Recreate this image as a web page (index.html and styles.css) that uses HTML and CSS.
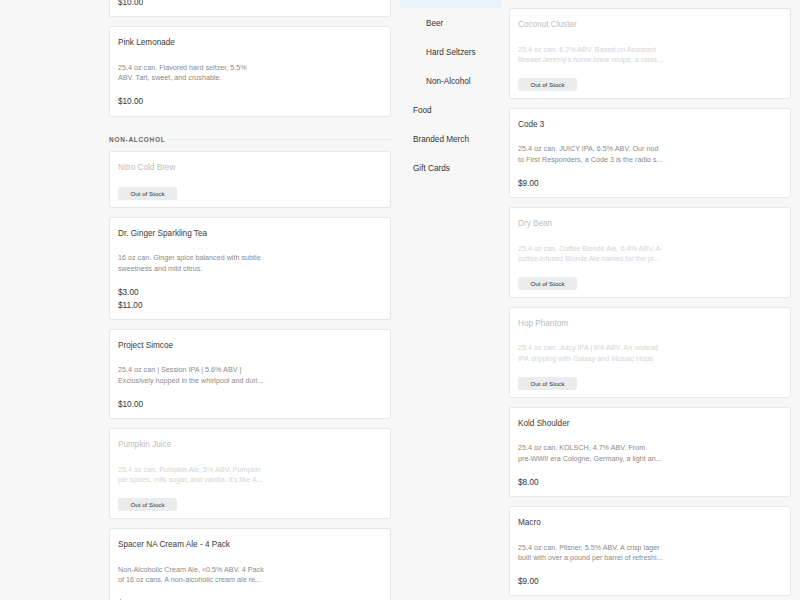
FILE: index.html
```html
<!DOCTYPE html>
<html lang="en">
<head>
  <meta charset="UTF-8">
  <meta name="viewport" content="width=device-width, initial-scale=1.0">
  <title>Menu</title>
  <link rel="stylesheet" href="styles.css">
</head>
<body>

  <div class="screen">

    <!-- Left pane: list scrolled down to Non-Alcohol -->
    <div class="pane">
      <nav class="sidebar"></nav>

      <div class="menu menu--scrolled">
        <div class="item">
          <h3 class="item-name">Black Cherry</h3>
          <p class="item-desc">25.4 oz can. Flavored hard seltzer, 5.5%<br>ABV. Juicy, bright, and refreshing.</p>
          <div class="item-price">$10.00</div>
        </div>

        <div class="item">
          <h3 class="item-name">Pink Lemonade</h3>
          <p class="item-desc">25.4 oz can. Flavored hard seltzer, 5.5%<br>ABV. Tart, sweet, and crushable.</p>
          <div class="item-price">$10.00</div>
        </div>

        <div class="section-title"><span>Non-Alcohol</span></div>

        <div class="item item--soldout">
          <h3 class="item-name">Nitro Cold Brew</h3>
          <span class="badge">Out of Stock</span>
        </div>

        <div class="item">
          <h3 class="item-name">Dr. Ginger Sparkling Tea</h3>
          <p class="item-desc">16 oz can. Ginger spice balanced with subtle<br>sweetness and mild citrus.</p>
          <div class="item-price">$3.00</div>
          <div class="item-price">$11.00</div>
        </div>

        <div class="item">
          <h3 class="item-name">Project Simcoe</h3>
          <p class="item-desc">25.4 oz can | Session IPA | 5.6% ABV |<br>Exclusively hopped in the whirlpool and duri...</p>
          <div class="item-price">$10.00</div>
        </div>

        <div class="item item--soldout">
          <h3 class="item-name">Pumpkin Juice</h3>
          <p class="item-desc">25.4 oz can. Pumpkin Ale, 5% ABV. Pumpkin<br>pie spices, milk sugar, and vanilla. It's like A...</p>
          <span class="badge">Out of Stock</span>
        </div>

        <div class="item">
          <h3 class="item-name">Spacer NA Cream Ale - 4 Pack</h3>
          <p class="item-desc">Non-Alcoholic Cream Ale, &lt;0.5% ABV. 4 Pack<br>of 16 oz cans. A non-alcoholic cream ale re...</p>
          <div class="item-price">$14.00</div>
        </div>
      </div>
    </div>

    <!-- Right pane: top of the list with category nav -->
    <div class="pane">
      <nav class="sidebar">
        <ul class="nav">
          <li><a href="#" class="nav-link nav-link--active">Drinks</a></li>
          <li><a href="#" class="nav-link nav-link--sub">Beer</a></li>
          <li><a href="#" class="nav-link nav-link--sub">Hard Seltzers</a></li>
          <li><a href="#" class="nav-link nav-link--sub">Non-Alcohol</a></li>
          <li><a href="#" class="nav-link">Food</a></li>
          <li><a href="#" class="nav-link">Branded Merch</a></li>
          <li><a href="#" class="nav-link">Gift Cards</a></li>
        </ul>
      </nav>

      <div class="menu">
        <div class="item item--soldout">
          <h3 class="item-name">Coconut Cluster</h3>
          <p class="item-desc">25.4 oz can. 6.2% ABV. Based on Assistant<br>Brewer Jeremy's home-brew recipe, a class...</p>
          <span class="badge">Out of Stock</span>
        </div>

        <div class="item">
          <h3 class="item-name">Code 3</h3>
          <p class="item-desc">25.4 oz can. JUICY IPA, 6.5% ABV. Our nod<br>to First Responders, a Code 3 is the radio s...</p>
          <div class="item-price">$9.00</div>
        </div>

        <div class="item item--soldout">
          <h3 class="item-name">Dry Bean</h3>
          <p class="item-desc">25.4 oz can. Coffee Blonde Ale, 6.4% ABV. A<br>coffee-infused Blonde Ale named for the pr...</p>
          <span class="badge">Out of Stock</span>
        </div>

        <div class="item item--soldout">
          <h3 class="item-name">Hop Phantom</h3>
          <p class="item-desc">25.4 oz can. Juicy IPA | 6% ABV. An undead<br>IPA dripping with Galaxy and Mosaic Hops</p>
          <span class="badge">Out of Stock</span>
        </div>

        <div class="item">
          <h3 class="item-name">Kold Shoulder</h3>
          <p class="item-desc">25.4 oz can. KOLSCH, 4.7% ABV. From<br>pre-WWII era Cologne, Germany, a light an...</p>
          <div class="item-price">$8.00</div>
        </div>

        <div class="item">
          <h3 class="item-name">Macro</h3>
          <p class="item-desc">25.4 oz can. Pilsner, 5.5% ABV. A crisp lager<br>built with over a pound per barrel of refreshi...</p>
          <div class="item-price">$9.00</div>
        </div>
      </div>
    </div>

  </div>

</body>
</html>
```

FILE: styles.css
```css
body {
  font-family: 'Liberation Sans', Arial, sans-serif;
  background-color: #f7f7f7;
  color: #333;
  margin: 0;
  padding: 0;
}

.screen {
  display: flex;
  height: 600px;
  overflow: hidden;
}

.pane {
  width: 400px;
  display: flex;
  gap: 8px;
  overflow: hidden;
}

/* Sidebar categories */
.sidebar {
  width: 101px;
  flex-shrink: 0;
}

.nav {
  list-style: none;
  margin: -21px 0 0 0;
  padding: 0;
}

.nav-link {
  display: block;
  box-sizing: border-box;
  height: 29px;
  padding: 10px 0 0 13px;
  line-height: 12px;
  font-size: 8.2px;
  color: #333;
  text-decoration: none;
}

.nav-link--sub {
  padding-left: 26px;
}

.nav-link--active {
  background-color: #e9f4fc;
}

/* Item list */
.menu {
  width: 282px;
  display: flex;
  flex-direction: column;
  gap: 9px;
  padding-top: 8px;
}

.menu--scrolled {
  padding-top: 0;
  margin-top: -73px;
}

.item {
  background-color: #fff;
  border: 1px solid #e8e8e8;
  border-radius: 2px;
  box-shadow: 0 0 2px rgba(0, 0, 0, 0.03);
  padding: 10px 8px 6.7px;
  flex-shrink: 0;
}

.item-name {
  margin: 0 0 13px;
  font-size: 8.2px;
  line-height: 12.5px;
  font-weight: normal;
  color: #3a3a3a;
}

.item-desc {
  margin: 0 0 13px;
  font-size: 7.2px;
  line-height: 10.3px;
  color: #8a8a8a;
  white-space: nowrap;
}

.item-price {
  font-size: 8.2px;
  line-height: 12.6px;
  color: #333;
}

.item--soldout .item-name {
  color: #bdbdbd;
}

.item--soldout .item-desc {
  color: #d4d4d4;
}

.badge {
  display: block;
  width: 59px;
  height: 13px;
  line-height: 13px;
  text-align: center;
  font-size: 6.2px;
  color: #333;
  background-color: #ececec;
  border-radius: 2px;
}

/* Category heading with rule */
.section-title {
  display: flex;
  align-items: center;
  gap: 4px;
  height: 4px;
  margin-top: 12px;
  font-size: 6.5px;
  font-weight: bold;
  letter-spacing: 0.7px;
  text-transform: uppercase;
  color: #666;
}

.section-title::after {
  content: "";
  flex: 1;
  height: 1px;
  background-color: #e6e6e6;
}
```
